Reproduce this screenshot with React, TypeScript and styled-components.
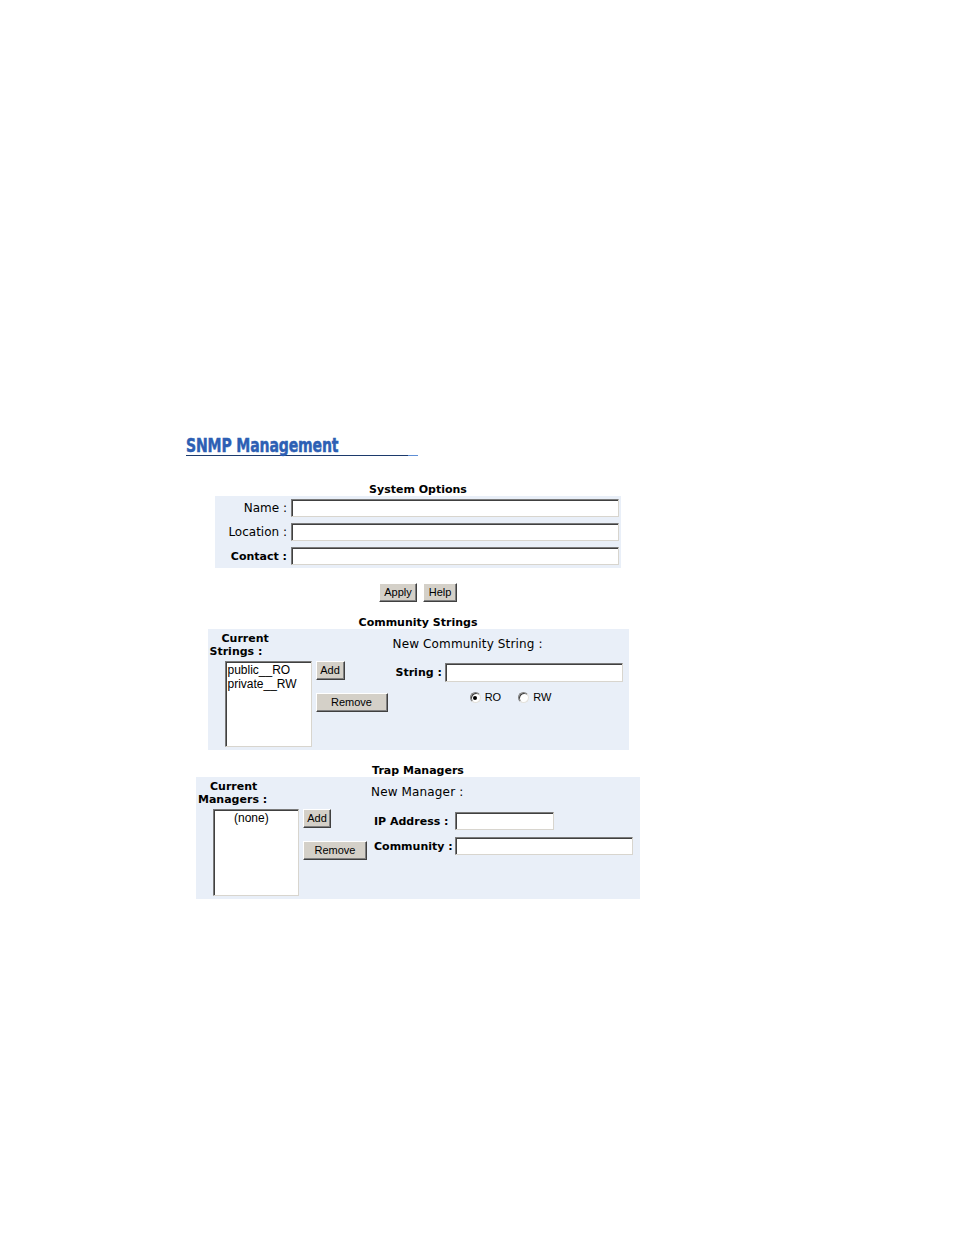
import styled, { createGlobalStyle } from 'styled-components';

const GlobalStyle = createGlobalStyle`
    body {
        margin: 0;
        background: #ffffff;
        color: #000000;
        font-family: 'DejaVu Sans', Verdana, sans-serif;
    }
`;

const communityStrings = ['public__RO', 'private__RW'];
const trapManagers = ['(none)'];

const App = () => {
    return (
        <>
            <GlobalStyle />
            <Page>
                <Column>
                    <Title>
                        <TitleText>SNMP Management</TitleText>
                    </Title>

                    <Caption $top={26}>System Options</Caption>
                    <OptionsTable>
                        <FieldLabel>Name :</FieldLabel>
                        <TextBox $width={328} />
                        <FieldLabel>Location :</FieldLabel>
                        <TextBox $width={328} />
                        <FieldLabel $bold>Contact :</FieldLabel>
                        <TextBox $width={328} />
                    </OptionsTable>
                    <ButtonRow>
                        <Button $width={38}>Apply</Button>
                        <Button $width={34}>Help</Button>
                    </ButtonRow>

                    <Caption $top={13}>Community Strings</Caption>
                    <Panel $width={421} $left={185}>
                        <CurrentLabel>
                            Current
                            <br />
                            Strings :
                        </CurrentLabel>
                        <NewHeading>New Community String :</NewHeading>
                        <ListRow>
                            <ListBox $width={87} $height={86}>
                                {communityStrings.map((s) => (
                                    <ListItem key={s}>{s}</ListItem>
                                ))}
                            </ListBox>
                            <SideButtons>
                                <Button $width={29}>Add</Button>
                                <Button $width={72} $gap={13}>
                                    Remove
                                </Button>
                            </SideButtons>
                        </ListRow>
                        <FormCol>
                            <StringRow>
                                <FormLabel>String :</FormLabel>
                                <TextBox $width={178} $height={19} />
                            </StringRow>
                            <RadioRow>
                                <RadioItem>
                                    <Radio type='radio' name='access' defaultChecked />
                                    RO
                                </RadioItem>
                                <RadioItem>
                                    <Radio type='radio' name='access' />
                                    RW
                                </RadioItem>
                            </RadioRow>
                        </FormCol>
                    </Panel>

                    <Caption $top={13}>Trap Managers</Caption>
                    <Panel $width={444} $left={175}>
                        <CurrentLabel>
                            Current
                            <br />
                            Managers :
                        </CurrentLabel>
                        <NewHeading>New Manager :</NewHeading>
                        <ListRow>
                            <ListBox $width={86} $height={87}>
                                {trapManagers.map((s) => (
                                    <ListItem key={s} $indent={19}>
                                        {s}
                                    </ListItem>
                                ))}
                            </ListBox>
                            <SideButtons>
                                <Button $width={28}>Add</Button>
                                <Button $width={64} $gap={13}>
                                    Remove
                                </Button>
                            </SideButtons>
                        </ListRow>
                        <ManagerForm>
                            <FormLabel>IP Address :</FormLabel>
                            <TextBox $width={99} />
                            <FormLabel>Community :</FormLabel>
                            <TextBox $width={178} />
                        </ManagerForm>
                    </Panel>
                </Column>
            </Page>
        </>
    );
};

const Page = styled.div`
    padding: 436px 0 300px 186px;
`;

const Column = styled.div`
    width: 464px;
    display: flex;
    flex-direction: column;
`;

const Title = styled.h1`
    margin: 0;
    width: 232px;
    height: 20px;
    font-family: 'DejaVu Sans', 'Liberation Sans', sans-serif;
    font-weight: bold;
    font-size: 19px;
    line-height: 19px;
    color: #2d5fb4;
    white-space: nowrap;
    background: linear-gradient(to right, #1c3a6c 222px, #5f8fd6 222px) left bottom / 100% 1px
        no-repeat;
`;

// the heading face is a condensed poster type; squeeze the nearest installed face
const TitleText = styled.span`
    display: inline-block;
    transform: scaleX(0.74);
    transform-origin: left center;
    letter-spacing: -0.2px;
    -webkit-text-stroke: 0.5px #2d5fb4;
`;

const Caption = styled.div<{ $top: number }>`
    margin-top: ${(p) => p.$top}px;
    text-align: center;
    font-weight: bold;
    font-size: 11px;
    line-height: 15px;
    height: 14px;
`;

const OptionsTable = styled.div`
    align-self: center;
    width: 406px;
    box-sizing: border-box;
    padding: 0 2px;
    background: #e9eff8;
    display: grid;
    grid-template-columns: 70px 328px;
    grid-auto-rows: 24px;
    column-gap: 4px;
    align-items: center;
`;

const FieldLabel = styled.div<{ $bold?: boolean }>`
    text-align: right;
    font-size: ${(p) => (p.$bold ? '11px' : '12px')};
    font-weight: ${(p) => (p.$bold ? 'bold' : 'normal')};
    white-space: nowrap;
`;

const TextBox = styled.input.attrs({ type: 'text' })<{ $width: number; $height?: number }>`
    box-sizing: border-box;
    width: ${(p) => p.$width}px;
    height: ${(p) => p.$height ?? 18}px;
    margin: 0;
    padding: 0 2px;
    background: #ffffff;
    border: 1px solid;
    border-color: #7a7a7a #d8d5ce #d8d5ce #7a7a7a;
    box-shadow: inset 1px 1px 0 #404040;
    font-family: 'Liberation Sans', Arial, sans-serif;
    font-size: 12px;
    outline: none;
`;

const ButtonRow = styled.div`
    margin-top: 15px;
    display: flex;
    justify-content: center;
    gap: 6px;
`;

const Button = styled.button<{ $width: number; $gap?: number }>`
    box-sizing: border-box;
    width: ${(p) => p.$width}px;
    height: 19px;
    margin: ${(p) => p.$gap ?? 0}px 0 0 0;
    padding: 0;
    background: #d4d0c8;
    border: 1px solid;
    border-color: #ffffff #404040 #404040 #ffffff;
    box-shadow: inset -1px -1px 0 #808080;
    font-family: 'Liberation Sans', Arial, sans-serif;
    font-size: 11px;
    line-height: 17px;
    color: #000000;
`;

const Panel = styled.div<{ $width: number; $left: number }>`
    align-self: center;
    width: ${(p) => p.$width}px;
    box-sizing: border-box;
    padding-bottom: 3px;
    background: #e9eff8;
    display: grid;
    grid-template-columns: ${(p) => p.$left}px 1fr;
    grid-template-rows: 32px auto;
`;

const CurrentLabel = styled.div`
    padding: 3px 0 0 2px;
    text-indent: 12px;
    font-weight: bold;
    font-size: 11px;
    line-height: 13px;
    white-space: nowrap;
`;

const NewHeading = styled.div`
    align-self: start;
    padding-top: 9px;
    font-size: 12px;
    letter-spacing: 0.15px;
    line-height: 13px;
    white-space: nowrap;
`;

const ListRow = styled.div`
    display: flex;
    align-items: flex-start;
    gap: 4px;
    padding-left: 17px;
`;

const ListBox = styled.div<{ $width: number; $height: number }>`
    box-sizing: border-box;
    width: ${(p) => p.$width}px;
    height: ${(p) => p.$height}px;
    padding: 1px 1px;
    background: #ffffff;
    border: 1px solid;
    border-color: #7a7a7a #d8d5ce #d8d5ce #7a7a7a;
    box-shadow: inset 1px 1px 0 #404040;
    font-family: 'Liberation Sans', Arial, sans-serif;
    font-size: 12px;
    line-height: 14px;
`;

const ListItem = styled.div<{ $indent?: number }>`
    padding-left: ${(p) => p.$indent ?? 1}px;
    white-space: nowrap;
`;

const SideButtons = styled.div`
    display: flex;
    flex-direction: column;
    align-items: flex-start;
`;

const FormCol = styled.div`
    padding-top: 2px;
    display: flex;
    flex-direction: column;
`;

const StringRow = styled.div`
    display: flex;
    align-items: center;
    gap: 3px;
    padding-left: 3px;
`;

const FormLabel = styled.div`
    font-weight: bold;
    font-size: 11px;
    white-space: nowrap;
`;

const RadioRow = styled.div`
    margin-top: 9px;
    display: flex;
    justify-content: center;
    gap: 17px;
`;

const RadioItem = styled.label`
    display: flex;
    align-items: center;
    gap: 4px;
    font-family: 'Liberation Sans', Arial, sans-serif;
    font-size: 11px;
    line-height: 13px;
`;

const Radio = styled.input`
    appearance: none;
    box-sizing: border-box;
    width: 11px;
    height: 11px;
    margin: 0;
    border-radius: 50%;
    border: 1px solid;
    border-color: #808080 #e4e2dc #e4e2dc #808080;
    box-shadow: inset 1px 1px 0 #404040;
    background: #ffffff;
    position: relative;
    &:checked::after {
        content: '';
        position: absolute;
        left: 2.5px;
        top: 2.5px;
        width: 4px;
        height: 4px;
        border-radius: 50%;
        background: #000000;
    }
`;

const ManagerForm = styled.div`
    padding: 3px 0 0 3px;
    display: grid;
    grid-template-columns: 81px auto;
    grid-auto-rows: 18px;
    row-gap: 7px;
    align-items: center;
    justify-items: start;
`;

export default App;
